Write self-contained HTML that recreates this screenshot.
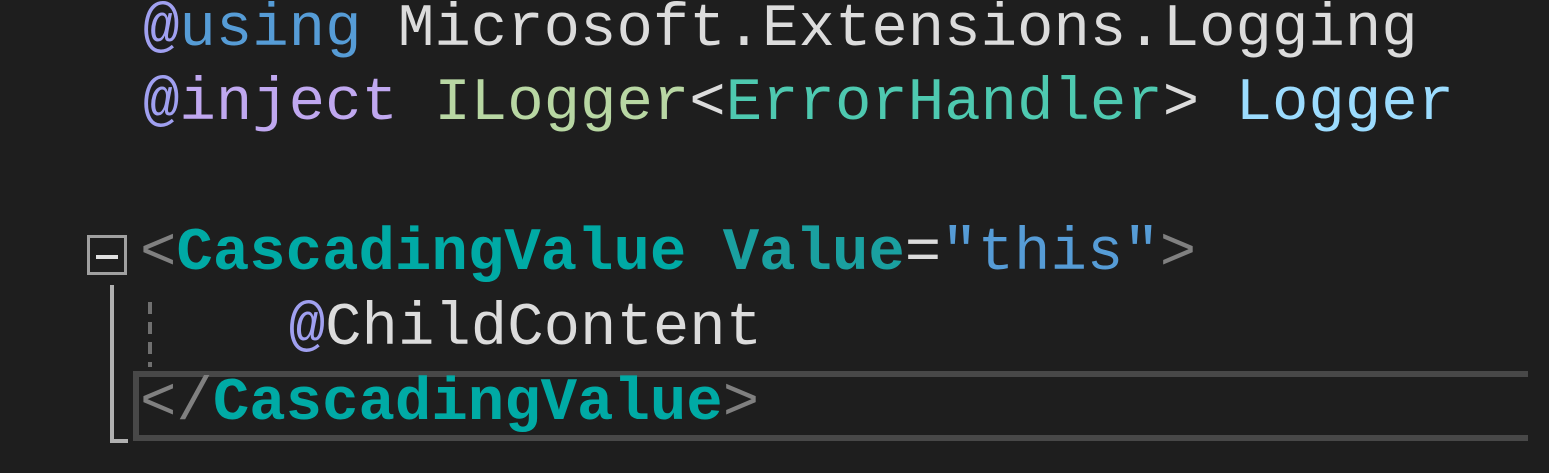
<!DOCTYPE html>
<html><head><style>
html,body{margin:0;padding:0;background:#1e1e1e;width:1549px;height:473px;overflow:hidden}
.l{position:absolute;left:143px;font-family:"Liberation Mono",monospace;font-size:60.7px;line-height:75px;white-space:pre;color:#dcdcdc}
.at{color:#a0a0f0}.kw{color:#569cd6}.inj{color:#c0a8f0}.ty{color:#b8d7a3}.cl{color:#4ec9b0}.pr{color:#9cdcfe}
.g{color:#808080}.tag{color:#00aaa5;font-weight:bold}.str{color:#569cd6}
</style></head><body>
<div style="position:absolute;left:133px;top:371px;width:1389px;height:58px;border:6px solid #484848;border-right:none;box-sizing:content-box"></div>
<div class="l" style="top:-8px"><span class="at">@</span><span class="kw">using</span> Microsoft.Extensions.Logging</div>
<div class="l" style="top:66px"><span class="at">@</span><span class="inj">inject</span> <span class="ty">ILogger</span>&lt;<span class="cl">ErrorHandler</span>&gt; <span class="pr">Logger</span></div>
<div class="l" style="top:216px;left:140px"><span class="g">&lt;</span><span class="tag">CascadingValue</span> <span class="tag" style="color:#1aa0a0">Value</span>=<span class="str">"this"</span><span class="g">&gt;</span></div>
<div class="l" style="top:291px">    <span class="at">@</span>ChildContent</div>
<div class="l" style="top:366px;left:140px"><span class="g">&lt;/</span><span class="tag">CascadingValue</span><span class="g">&gt;</span></div>
<div style="position:absolute;left:87px;top:235px;width:34px;height:34px;border:3px solid #a0a0a0;background:#1e1e1e"></div>
<div style="position:absolute;left:96px;top:255px;width:22px;height:4px;background:#e0e0e0"></div>
<div style="position:absolute;left:110px;top:285px;width:4px;height:158px;background:#b0b0b0"></div>
<div style="position:absolute;left:110px;top:439px;width:18px;height:4px;background:#b0b0b0"></div>
<div style="position:absolute;left:148px;top:302px;width:4px;height:65px;background:repeating-linear-gradient(#707070 0 12px,transparent 12px 20px)"></div>
</body></html>
